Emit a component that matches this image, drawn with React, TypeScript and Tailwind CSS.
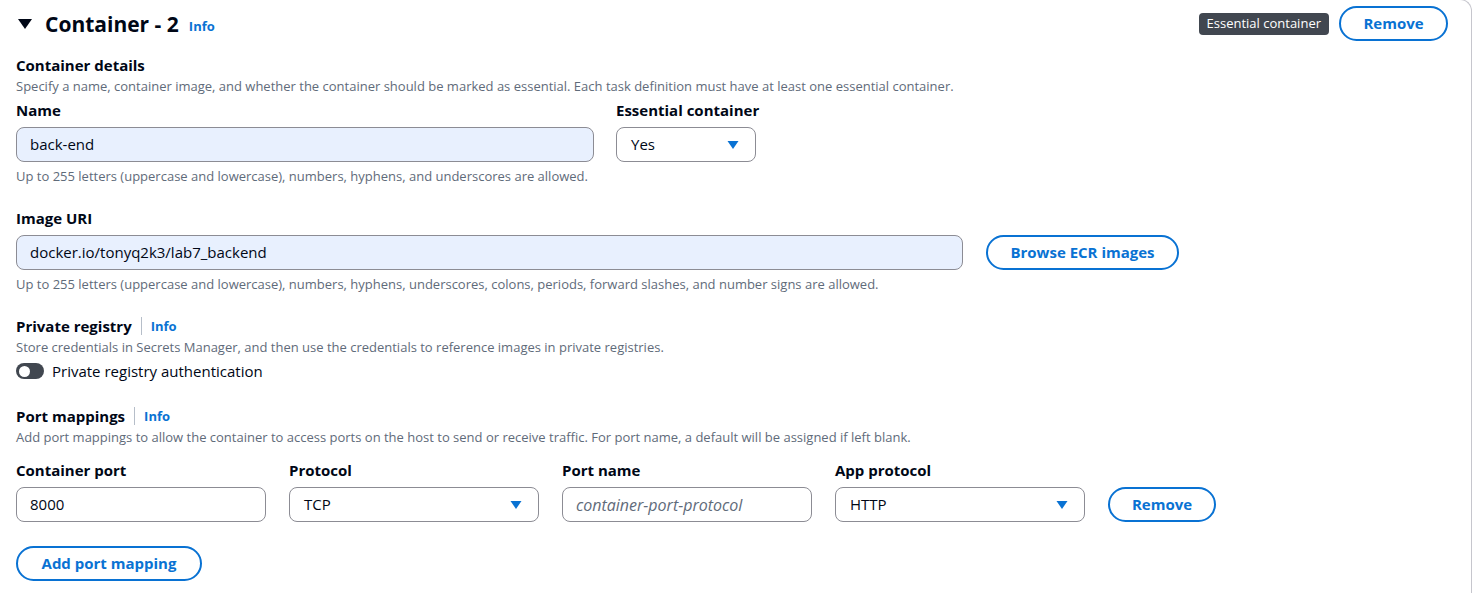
import { ReactNode } from 'react';

const font = { fontFamily: '"Open Sans", "Liberation Sans", sans-serif' };

const Caret = () => (
  <svg width="12" height="10" viewBox="0 0 12 10" className="shrink-0">
    <path d="M0.5 1h11L6 9z" fill="#0972d3" />
  </svg>
);

const Label = ({ children }: { children: ReactNode }) => (
  <div className="text-[15px] font-bold text-[#000716] leading-[22px] mb-[6px]">{children}</div>
);

const Hint = ({ children }: { children: ReactNode }) => (
  <div className="text-[13px] text-[#5f6b7a] leading-[18px] mt-[5px]">{children}</div>
);

const Info = () => <span className="text-[13px] font-bold text-[#0972d3]">Info</span>;

const Heading = ({ title, info }: { title: string; info?: boolean }) => (
  <div className="flex items-center leading-[22px]">
    <span className="text-[15px] font-bold text-[#000716]">{title}</span>
    {info && (
      <>
        <span className="mx-[9px] h-[18px] w-px bg-[#b6bec9]" />
        <Info />
      </>
    )}
  </div>
);

const Desc = ({ children }: { children: ReactNode }) => (
  <div className="text-[13px] text-[#5f6b7a] leading-[18px] mt-[1px]">{children}</div>
);

const Button = ({ children, className }: { children: ReactNode; className: string }) => (
  <button
    type="button"
    className={`h-[35px] rounded-full border-2 border-[#0972d3] text-[15px] font-bold text-[#0972d3] bg-white ${className}`}
  >
    {children}
  </button>
);

const Select = ({ value, className }: { value: string; className: string }) => (
  <div
    className={`h-[35px] flex items-center justify-between rounded-lg border border-[#8c8c94] bg-white pl-[14px] pr-[16px] text-[15px] text-[#000716] ${className}`}
  >
    <span>{value}</span>
    <Caret />
  </div>
);

const TextBox = ({ value, filled, placeholder, className }: { value?: string; filled?: boolean; placeholder?: string; className: string }) => (
  <div
    className={`h-[35px] flex items-center rounded-lg border border-[#8c8c94] px-[13px] text-[15px] ${filled ? 'bg-[#e8f0fe]' : 'bg-white'} ${className}`}
  >
    {value ? (
      <span className="text-[#000716]">{value}</span>
    ) : (
      <span className="italic text-[#5f6b7a] text-[16px]">{placeholder}</span>
    )}
  </div>
);

export default function App() {
  return (
    <div className="w-[1473px] h-[593px] bg-white overflow-hidden" style={font}>
      <div className="h-[600px] -mt-[1px] mr-[1px] border-r border-t border-[#c6c6cd] rounded-tr-[12px] pl-[16px] pr-[23px]">
        {/* header */}
        <div className="flex items-center justify-between pt-[6px]">
          <div className="flex items-center">
            <svg width="16" height="12" viewBox="0 0 16 12" className="ml-[1px] mr-[12px]">
              <path d="M1 1h14L8 11z" fill="#000716" />
            </svg>
            <span className="text-[21px] font-bold text-[#000716] leading-[28px]">Container - 2</span>
            <span className="ml-[10px] mt-[3px]"><Info /></span>
          </div>
          <div className="flex items-center gap-[10px]">
            <span className="h-[22px] px-[8px] flex items-center rounded-[4px] bg-[#414750] text-white text-[13px]">Essential container</span>
            <Button className="w-[109px]">Remove</Button>
          </div>
        </div>

        {/* container details */}
        <div className="mt-[13px]">
          <Heading title="Container details" />
          <Desc>Specify a name, container image, and whether the container should be marked as essential. Each task definition must have at least one essential container.</Desc>
        </div>

        <div className="flex gap-[22px] mt-[4px]">
          <div>
            <Label>Name</Label>
            <TextBox value="back-end" filled className="w-[578px]" />
          </div>
          <div>
            <Label>Essential container</Label>
            <Select value="Yes" className="w-[140px]" />
          </div>
        </div>
        <Hint>Up to 255 letters (uppercase and lowercase), numbers, hyphens, and underscores are allowed.</Hint>

        <div className="mt-[22px]">
          <Label>Image URI</Label>
          <div className="flex items-center gap-[23px]">
            <TextBox value="docker.io/tonyq2k3/lab7_backend" filled className="w-[947px]" />
            <Button className="w-[193px]">Browse ECR images</Button>
          </div>
          <Hint>Up to 255 letters (uppercase and lowercase), numbers, hyphens, underscores, colons, periods, forward slashes, and number signs are allowed.</Hint>
        </div>

        {/* private registry */}
        <div className="mt-[22px]">
          <Heading title="Private registry" info />
          <Desc>Store credentials in Secrets Manager, and then use the credentials to reference images in private registries.</Desc>
          <div className="flex items-center gap-[8px] mt-[4px] h-[22px]">
            <span className="w-[28px] h-[16px] rounded-full bg-[#414750] flex items-center pl-[3px]">
              <span className="w-[11px] h-[11px] rounded-full bg-white" />
            </span>
            <span className="text-[15px] text-[#000716]">Private registry authentication</span>
          </div>
        </div>

        {/* port mappings */}
        <div className="mt-[23px]">
          <Heading title="Port mappings" info />
          <Desc>Add port mappings to allow the container to access ports on the host to send or receive traffic. For port name, a default will be assigned if left blank.</Desc>
        </div>
        <div className="flex items-end gap-[23px] mt-[13px]">
          <div>
            <Label>Container port</Label>
            <TextBox value="8000" className="w-[250px]" />
          </div>
          <div>
            <Label>Protocol</Label>
            <Select value="TCP" className="w-[250px]" />
          </div>
          <div>
            <Label>Port name</Label>
            <TextBox placeholder="container-port-protocol" className="w-[250px]" />
          </div>
          <div>
            <Label>App protocol</Label>
            <Select value="HTTP" className="w-[250px]" />
          </div>
          <Button className="w-[108px]">Remove</Button>
        </div>
        <Button className="w-[186px] mt-[24px]">Add port mapping</Button>
      </div>
    </div>
  );
}
